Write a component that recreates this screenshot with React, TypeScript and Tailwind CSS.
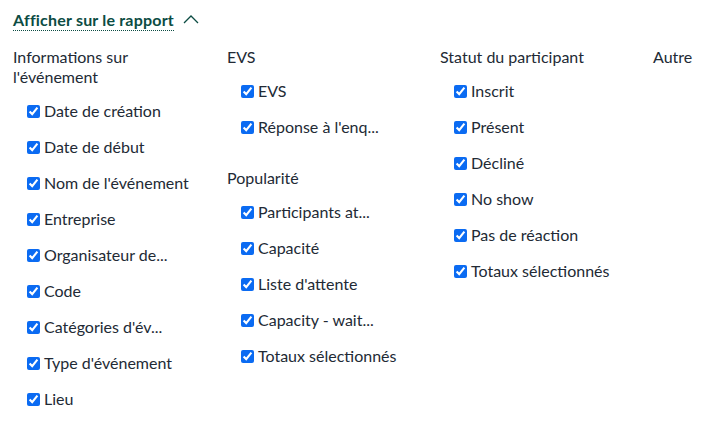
import React from 'react';

type Section = { title: React.ReactNode; items: string[] };

const columns: Section[][] = [
    [
        {
            title: (
                <>
                    Informations sur
                    <br />
                    l'événement
                </>
            ),
            items: [
                'Date de création',
                'Date de début',
                "Nom de l'événement",
                'Entreprise',
                'Organisateur de...',
                'Code',
                "Catégories d'év...",
                "Type d'événement",
                'Lieu',
            ],
        },
    ],
    [
        { title: 'EVS', items: ['EVS', "Réponse à l'enq..."] },
        {
            title: 'Popularité',
            items: ['Participants at...', 'Capacité', "Liste d'attente", 'Capacity - wait...', 'Totaux sélectionnés'],
        },
    ],
    [
        {
            title: 'Statut du participant',
            items: ['Inscrit', 'Présent', 'Décliné', 'No show', 'Pas de réaction', 'Totaux sélectionnés'],
        },
    ],
    [{ title: 'Autre', items: [] }],
];

function CheckRow({ label }: { label: string }) {
    return (
        <label className="flex h-9 items-center pl-[14px] gap-[4px] whitespace-nowrap">
            <input type="checkbox" defaultChecked className="m-0 h-[13px] w-[13px] accent-[#0b6bf2]" />
            <span>{label}</span>
        </label>
    );
}

export default function App() {
    return (
        <div className="w-[722px] h-[438px] bg-white text-[#222a35] text-[16px] px-[13px] pt-[8px]" style={{ fontFamily: 'Lato, "Noto Sans", sans-serif' }}>
            {/* Toggle header */}
            <div className="flex items-center gap-[9px] h-[24px]">
                <span className="font-bold text-[16px] tracking-[0.2px] leading-[20px] text-[#0c4c43] border-b border-dotted border-[#0c4c43]">
                    Afficher sur le rapport
                </span>
                <svg width="16" height="10" viewBox="0 0 16 10" className="-mt-[2px]">
                    <polyline points="1,9 8,2 15,9" fill="none" stroke="#0c4c43" strokeWidth="1.3" />
                </svg>
            </div>

            {/* Field columns */}
            <div className="grid grid-cols-[214px_213px_213px_1fr] mt-[15px]">
                {columns.map((sections, ci) => (
                    <div key={ci} className="flex flex-col gap-[23px]">
                        {sections.map((s, si) => (
                            <div key={si}>
                                <div className="leading-[20px]">{s.title}</div>
                                {s.items.length > 0 && (
                                    <div className="mt-[6px]">
                                        {s.items.map((it) => (
                                            <CheckRow key={it} label={it} />
                                        ))}
                                    </div>
                                )}
                            </div>
                        ))}
                    </div>
                ))}
            </div>
        </div>
    );
}
